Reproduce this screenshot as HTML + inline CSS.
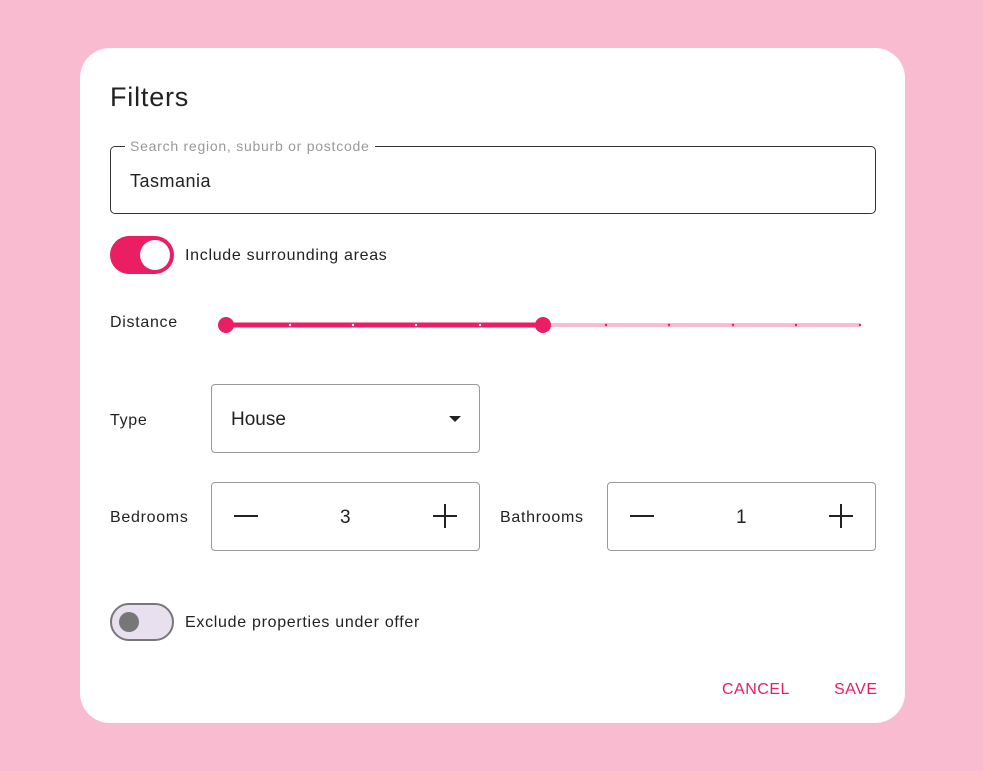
<!DOCTYPE html><html><head><style>
body{margin:0;width:983px;height:771px;background:#f8bbd0;font-family:"Liberation Sans",sans-serif;position:relative;overflow:hidden;color:#222}
.a{position:absolute}
.card{left:80px;top:48px;width:825px;height:675px;background:#fff;border-radius:30px}
.box{border:1px solid #999;border-radius:4px;box-sizing:border-box}
.lbl{font-size:16px;color:#222;letter-spacing:0.7px}
</style></head><body>
<div class="a card"></div>
<div class="a" style="left:110px;top:82px;font-size:27px;color:#222;letter-spacing:0.8px">Filters</div>
<div class="a box" style="left:110px;top:146px;width:766px;height:68px;border-color:#333;border-radius:5px"></div>
<div class="a" style="left:125px;top:138px;padding:0 5px;background:#fff;font-size:14px;color:#999;letter-spacing:0.75px">Search region, suburb or postcode</div>
<div class="a" style="left:130px;top:171px;font-size:18px;letter-spacing:0.5px">Tasmania</div>
<div class="a" style="left:110px;top:236px;width:64px;height:38px;border-radius:19px;background:#e91e63"></div>
<div class="a" style="left:140px;top:240px;width:30px;height:30px;border-radius:50%;background:#fff"></div>
<div class="a lbl" style="left:185px;top:247px">Include surrounding areas</div>
<div class="a lbl" style="left:110px;top:314px">Distance</div>
<svg class="a" style="left:0;top:0" width="983" height="771">
<line x1="226" y1="325" x2="860" y2="325" stroke="#f8bbd0" stroke-width="4"/>
<line x1="226" y1="325" x2="543" y2="325" stroke="#e91e63" stroke-width="5"/>
<g fill="#fff"><circle cx="290" cy="325" r="1.2"/><circle cx="353" cy="325" r="1.2"/><circle cx="416" cy="325" r="1.2"/><circle cx="480" cy="325" r="1.2"/></g>
<g fill="#e91e63"><circle cx="606" cy="325" r="1.2"/><circle cx="669" cy="325" r="1.2"/><circle cx="733" cy="325" r="1.2"/><circle cx="796" cy="325" r="1.2"/><circle cx="860" cy="325" r="1.2"/>
<circle cx="226" cy="325" r="8"/><circle cx="543" cy="325" r="8"/></g>
<path d="M449 416h12l-6 6z" fill="#222"/>
<g stroke="#222" stroke-width="2"><line x1="234" y1="516" x2="258" y2="516"/><line x1="433" y1="516" x2="457" y2="516"/><line x1="445" y1="504" x2="445" y2="528"/>
<line x1="630" y1="516" x2="654" y2="516"/><line x1="829" y1="516" x2="853" y2="516"/><line x1="841" y1="504" x2="841" y2="528"/></g>
</svg>
<div class="a lbl" style="left:110px;top:412px">Type</div>
<div class="a box" style="left:211px;top:384px;width:269px;height:69px"></div>
<div class="a" style="left:231px;top:409px;font-size:19px">House</div>
<div class="a lbl" style="left:110px;top:509px">Bedrooms</div>
<div class="a box" style="left:211px;top:482px;width:269px;height:69px"></div>
<div class="a" style="left:340px;top:507px;font-size:19px">3</div>
<div class="a lbl" style="left:500px;top:509px">Bathrooms</div>
<div class="a box" style="left:607px;top:482px;width:269px;height:69px"></div>
<div class="a" style="left:736px;top:507px;font-size:19px">1</div>
<div class="a" style="left:110px;top:603px;width:64px;height:38px;border-radius:19px;background:#e8e0ee;border:2px solid #777;box-sizing:border-box"></div>
<div class="a" style="left:119px;top:612px;width:20px;height:20px;border-radius:50%;background:#777"></div>
<div class="a lbl" style="left:185px;top:614px">Exclude properties under offer</div>
<div class="a" style="left:722px;top:681px;font-size:16px;color:#e91e63;letter-spacing:0.5px">CANCEL</div>
<div class="a" style="left:834px;top:681px;font-size:16px;color:#e91e63;letter-spacing:0.5px">SAVE</div>
</body></html>
